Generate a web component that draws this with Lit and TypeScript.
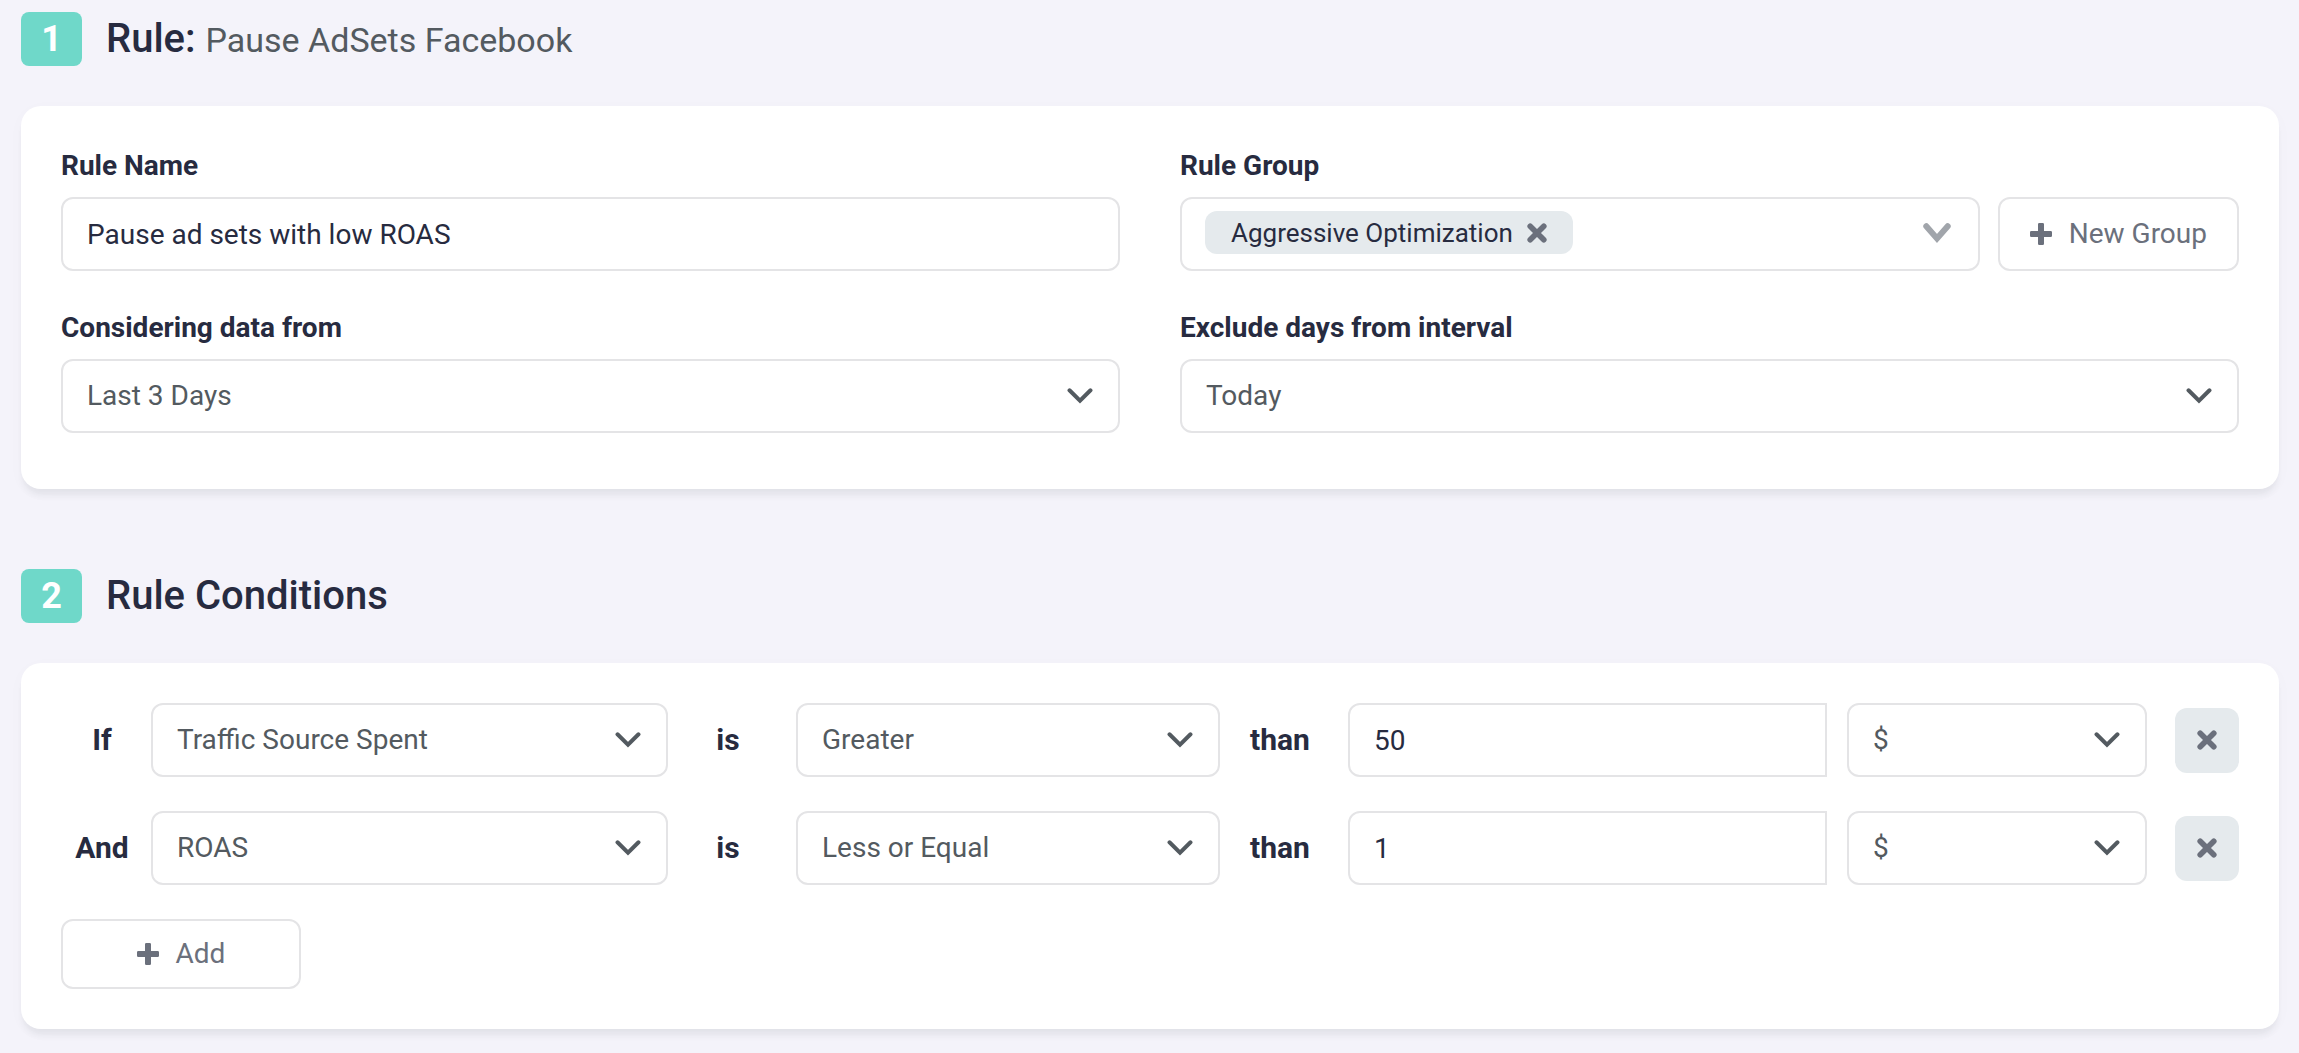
import { LitElement, html, css, svg } from "lit";
import { customElement, property, state } from "lit/decorators.js";

type IconName = "chevron" | "caret" | "plus" | "cross";

const ICONS: Record<IconName, { width: number; height: number; shape: unknown }> = {
  chevron: {
    width: 26,
    height: 16,
    shape: svg`<path d="M2.5 2.3 13 12.600 23.500 2.300" fill="none" stroke="currentColor" stroke-width="4" stroke-linecap="round" stroke-linejoin="miter"></path>`,
  },
  caret: {
    width: 28,
    height: 20,
    shape: svg`<path d="M3.300 3.300 14 15.400 24.700 3.300" fill="none" stroke="currentColor" stroke-width="6" stroke-linecap="round" stroke-linejoin="miter"></path>`,
  },
  plus: {
    width: 22,
    height: 22,
    shape: svg`<path d="M9.300 0h3.400q1.300 0 1.300 1.300V8h6.700q1.300 0 1.300 1.300v3.400q0 1.300-1.300 1.300H14v6.700q0 1.300-1.300 1.300H9.300Q8 22 8 20.700V14H1.300Q0 14 0 12.700V9.300Q0 8 1.300 8H8V1.300Q8 0 9.300 0Z" fill="currentColor"></path>`,
  },
  cross: {
    width: 20,
    height: 20,
    shape: svg`<path d="M3.200 3.200 16.800 16.800M16.800 3.200 3.200 16.800" fill="none" stroke="currentColor" stroke-width="5.600" stroke-linecap="round"></path>`,
  },
};

const icon = (name: IconName) => {
  const { width, height, shape } = ICONS[name];
  return html`<svg class="icon" width=${width} height=${height} viewBox="0 0 ${width} ${height}" aria-hidden="true">${shape}</svg>`;
};

const controls = css`
  * {
    box-sizing: border-box;
  }
  button,
  input,
  select {
    margin: 0;
    font: inherit;
    color: inherit;
  }
  button {
    cursor: pointer;
  }
  .icon {
    display: block;
    flex: none;
  }
`;

@customElement("select-box")
export class SelectBox extends LitElement {
  static styles = [
    controls,
    css`
      :host {
        display: block;
        min-width: 0;
      }
      .box {
        display: grid;
        align-items: center;
      }
      .select,
      .arrow {
        grid-area: 1 / 1;
      }
      .select {
        appearance: none;
        width: 100%;
        height: 74px;
        padding: 0 64px 0 24px;
        border: 2px solid #e4e4e6;
        border-radius: 12px;
        background: #fff;
        color: #535a60;
      }
      .arrow {
        justify-self: end;
        margin-right: 27px;
        color: #535a60;
        pointer-events: none;
      }
    `,
  ];

  @property() label = "";
  @property() value = "";
  @property({ attribute: false }) options: string[] = [];

  render() {
    return html`
      <div class="box">
        <select class="select" aria-label=${this.label}>
          ${this.options.map((o) => html`<option ?selected=${o === this.value}>${o}</option>`)}
        </select>
        <span class="arrow">${icon("chevron")}</span>
      </div>
    `;
  }
}

interface Condition {
  joiner: string;
  metric: string;
  operator: string;
  amount: string;
  unit: string;
}

const METRICS = ["Traffic Source Spent", "ROAS"];
const OPERATORS = ["Greater", "Less or Equal"];
const UNITS = ["$", "%"];

@customElement("app-root")
export class AppRoot extends LitElement {
  static styles = [
    controls,
    css`
      :host {
        display: block;
        min-height: 100vh;
        box-sizing: border-box;
        padding: 12px 20px 24px 21px;
        background: #f4f3fa;
        color: #272b40;
        font: 400 28px/40px Roboto, "Liberation Sans", sans-serif;
      }
      .section + .section {
        margin-top: 80px;
      }
      .head {
        display: flex;
        align-items: center;
        gap: 24px;
        height: 54px;
        margin-bottom: 40px;
      }
      .step {
        display: flex;
        align-items: center;
        justify-content: center;
        width: 61px;
        height: 54px;
        border-radius: 8px;
        background: #6fd8c9;
        color: #fff;
        font-size: 36px;
        font-weight: 700;
      }
      .title {
        margin: 0;
        font-size: 40px;
        line-height: 54px;
        font-weight: 500;
      }
      .subtitle {
        font-size: 34px;
        font-weight: 400;
        color: #535a60;
      }
      .card {
        padding: 40px;
        border-radius: 20px;
        background: #fff;
        box-shadow: 0 8px 6px -2px rgba(40, 50, 60, 0.07), 0 4px 20px rgba(40, 50, 60, 0.02);
      }
      .form {
        display: grid;
        grid-template-columns: repeat(2, minmax(0, 1fr));
        gap: 37px 60px;
        padding-bottom: 56px;
      }
      .field {
        display: flex;
        flex-direction: column;
        gap: 11px;
      }
      .label {
        font-weight: 700;
      }
      .text {
        width: 100%;
        min-width: 0;
        height: 74px;
        padding: 0 24px;
        border: 2px solid #e4e4e6;
        border-radius: 12px;
        background: #fff;
      }
      .group {
        display: flex;
        gap: 18px;
      }
      .combo {
        display: flex;
        flex: 1;
        align-items: flex-start;
        justify-content: space-between;
        height: 74px;
        padding: 12px 27px 0 23px;
        border: 2px solid #e4e4e6;
        border-radius: 12px;
      }
      .chip {
        display: flex;
        align-items: center;
        gap: 14px;
        height: 43px;
        padding: 0 26px;
        border-radius: 12px;
        background: #e5eaed;
        font-size: 26px;
      }
      .bare {
        display: flex;
        align-items: center;
        height: 43px;
        padding: 0;
        border: 0;
        background: none;
        color: #6b707c;
      }
      .open {
        color: #a1a5ab;
      }
      .outline {
        display: flex;
        align-items: center;
        justify-content: center;
        gap: 17px;
        height: 74px;
        padding: 0 30px;
        border: 2px solid #e4e4e6;
        border-radius: 12px;
        background: #fff;
        color: #6b707c;
      }
      .add {
        width: 240px;
        height: 70px;
      }
      .conditions {
        display: flex;
        flex-direction: column;
        gap: 34px;
      }
      .condition {
        display: grid;
        grid-template-columns:
          90px minmax(0, 517fr) 128px minmax(0, 424fr) 128px
          minmax(0, 479fr) 20px minmax(0, 300fr) 92px;
        align-items: center;
      }
      .word {
        padding-right: 8px;
        text-align: center;
        font-size: 30px;
        font-weight: 700;
      }
      .amount {
        border-top-right-radius: 0;
        border-bottom-right-radius: 0;
      }
      .unit {
        grid-column: 8;
      }
      .remove {
        display: flex;
        align-items: center;
        justify-content: center;
        justify-self: end;
        width: 64px;
        height: 65px;
        padding: 0;
        border: 0;
        border-radius: 12px;
        background: #e5eaed;
        color: #6b707c;
      }
    `,
  ];

  @state() private conditions: Condition[] = [
    { joiner: "If", metric: "Traffic Source Spent", operator: "Greater", amount: "50", unit: "$" },
    { joiner: "And", metric: "ROAS", operator: "Less or Equal", amount: "1", unit: "$" },
  ];

  private addCondition() {
    this.conditions = [
      ...this.conditions,
      { joiner: "And", metric: METRICS[0], operator: OPERATORS[0], amount: "", unit: UNITS[0] },
    ];
  }

  private removeCondition(index: number) {
    this.conditions = this.conditions.filter((_, i) => i !== index);
  }

  private renderCondition(c: Condition, index: number) {
    return html`
      <div class="condition">
        <span class="word">${c.joiner}</span>
        <select-box label="Metric" .value=${c.metric} .options=${METRICS}></select-box>
        <span class="word">is</span>
        <select-box label="Comparison" .value=${c.operator} .options=${OPERATORS}></select-box>
        <span class="word">than</span>
        <input class="text amount" type="text" aria-label="Value" .value=${c.amount} />
        <select-box class="unit" label="Unit" .value=${c.unit} .options=${UNITS}></select-box>
        <button class="remove" type="button" aria-label="Remove condition" @click=${() => this.removeCondition(index)}>
          ${icon("cross")}
        </button>
      </div>
    `;
  }

  render() {
    return html`
      <section class="section">
        <header class="head">
          <span class="step">1</span>
          <h2 class="title">Rule: <span class="subtitle">Pause AdSets Facebook</span></h2>
        </header>
        <div class="card form">
          <div class="field">
            <label class="label" for="rule-name">Rule Name</label>
            <input class="text" id="rule-name" type="text" value="Pause ad sets with low ROAS" />
          </div>
          <div class="field">
            <span class="label" id="rule-group">Rule Group</span>
            <div class="group">
              <div class="combo" role="group" aria-labelledby="rule-group">
                <span class="chip">
                  Aggressive Optimization
                  <button class="bare" type="button" aria-label="Remove Aggressive Optimization">${icon("cross")}</button>
                </span>
                <button class="bare open" type="button" aria-label="Show groups">${icon("caret")}</button>
              </div>
              <button class="outline" type="button">${icon("plus")}New Group</button>
            </div>
          </div>
          <div class="field">
            <span class="label">Considering data from</span>
            <select-box label="Considering data from" value="Last 3 Days" .options=${["Last 3 Days"]}></select-box>
          </div>
          <div class="field">
            <span class="label">Exclude days from interval</span>
            <select-box label="Exclude days from interval" value="Today" .options=${["Today"]}></select-box>
          </div>
        </div>
      </section>
      <section class="section">
        <header class="head">
          <span class="step">2</span>
          <h2 class="title">Rule Conditions</h2>
        </header>
        <div class="card conditions">
          ${this.conditions.map((c, i) => this.renderCondition(c, i))}
          <button class="outline add" type="button" @click=${this.addCondition}>${icon("plus")}Add</button>
        </div>
      </section>
    `;
  }
}
